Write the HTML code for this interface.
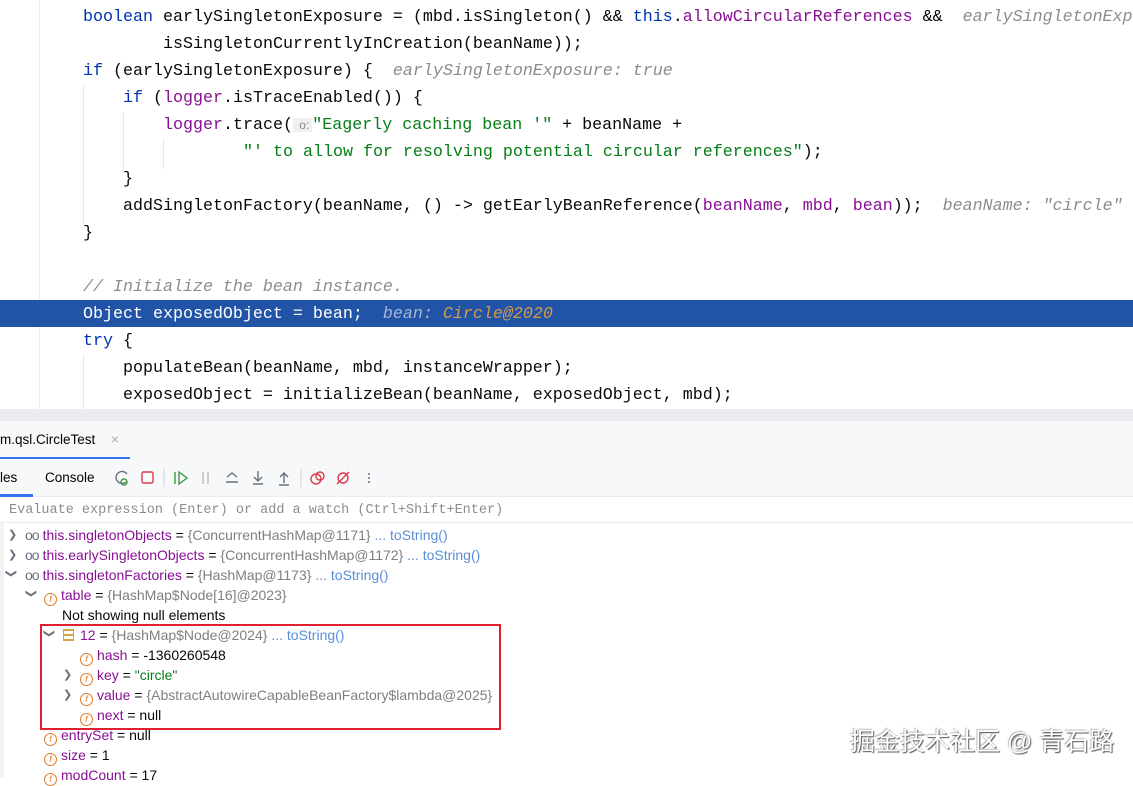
<!DOCTYPE html>
<html><head><meta charset="utf-8"><style>
*{margin:0;padding:0;box-sizing:border-box}
body{width:1133px;height:777px;overflow:hidden;background:#fff;position:relative;font-family:"Liberation Sans",sans-serif}
.ed{position:absolute;left:0;top:0;width:1133px;height:420px;background:#fff;overflow:hidden}
.gut{position:absolute;left:0;top:0;width:40px;height:420px;border-right:1px solid #ebecf0}
.l{position:absolute;left:0;height:27px;line-height:27px;font-family:"Liberation Mono",monospace;font-size:16.67px;color:#080808;white-space:pre}
.k{color:#0033b3}.f{color:#871094}.s{color:#067d17}.h{color:#8c8c8c;font-style:italic}
.hl{position:absolute;left:0;top:300px;width:1133px;height:27px;background:#2154a6}
.ig{position:absolute;width:1px;background:#e6e6e6}
.tabs{position:absolute;left:0;top:420px;width:1133px;height:40px;background:#f7f8fa;border-top:1px solid #ebecf0;border-bottom:1px solid #ebecf0;font-size:13.5px;color:#000}
.tb{position:absolute;left:0;top:459px;width:1133px;height:38px;background:#f7f8fa;border-bottom:1px solid #ebecf0;font-size:13.5px}
.ev{position:absolute;left:0;top:498px;width:1133px;height:25px;border-bottom:1px solid #ebecf0;font-family:"Liberation Mono",monospace;font-size:13.5px;color:#8c8c8c;line-height:25px;padding-left:9px}
.r{position:absolute;height:20px;line-height:20px;font-size:14px;white-space:nowrap;color:#080808}
.n{color:#871094}.g{color:#7f7f7f}.b{color:#5a8fd6}.sg{color:#067d17}
.fi{display:inline-block;width:13px;height:13px;border:1.3px solid #e07b2a;border-radius:50%;color:#e07b2a;font-size:9px;line-height:11px;text-align:center;font-style:italic;vertical-align:-2px;margin-right:4px}
.ch{position:absolute;color:#6c707e;font-size:11px}
.oo{color:#6c707e;letter-spacing:-1px;margin-right:4px}
</style></head><body>
<div class="ed">
<div class="gut"></div>
<div class="hl"></div>
<div class="ig" style="left:83px;top:85px;height:140px"></div>
<div class="ig" style="left:123px;top:112px;height:60px"></div>
<div class="ig" style="left:163px;top:139px;height:30px"></div>
<div class="ig" style="left:83px;top:355px;height:60px"></div>
<div class="l" style="top:4px;left:83px"><span class="k">boolean</span> earlySingletonExposure = (mbd.isSingleton() &amp;&amp; <span class="k">this</span>.<span class="f">allowCircularReferences</span> &amp;&amp;  <span class="h">earlySingletonExposure: true</span></div>
<div class="l" style="top:31px;left:163px">isSingletonCurrentlyInCreation(beanName));</div>
<div class="l" style="top:58px;left:83px"><span class="k">if</span> (earlySingletonExposure) {  <span class="h">earlySingletonExposure: true</span></div>
<div class="l" style="top:85px;left:123px"><span class="k">if</span> (<span class="f">logger</span>.isTraceEnabled()) {</div>
<div class="l" style="top:112px;left:163px"><span class="f">logger</span>.trace(<span style="background:#f0f0f0;color:#8c8c8c;font-family:'Liberation Sans';font-size:12px;padding:0 3px"> o:</span><span class="s">"Eagerly caching bean '"</span> + beanName +</div>
<div class="l" style="top:139px;left:243px"><span class="s">"' to allow for resolving potential circular references"</span>);</div>
<div class="l" style="top:166px;left:123px">}</div>
<div class="l" style="top:193px;left:123px">addSingletonFactory(beanName, () -&gt; getEarlyBeanReference(<span class="f">beanName</span>, <span class="f">mbd</span>, <span class="f">bean</span>));  <span class="h">beanName: "circle"</span></div>
<div class="l" style="top:220px;left:83px">}</div>
<div class="l" style="top:274px;left:83px"><span class="h">// Initialize the bean instance.</span></div>
<div class="l" style="top:301px;left:83px;color:#fff">Object exposedObject = bean;  <span style="font-style:italic;color:#a9b7d6">bean: </span><span style="font-style:italic;color:#d59a4a">Circle@2020</span></div>
<div class="l" style="top:328px;left:83px"><span class="k">try</span> {</div>
<div class="l" style="top:355px;left:123px">populateBean(beanName, mbd, instanceWrapper);</div>
<div class="l" style="top:382px;left:123px">exposedObject = initializeBean(beanName, exposedObject, mbd);</div>
<div class="l" style="top:405px;left:83px">}</div>
<div style="position:absolute;left:0;top:409px;width:1133px;height:11px;background:#ebecf0"></div>
</div>
<div class="tabs"><span style="position:absolute;left:0;top:11px">m.qsl.CircleTest</span><span style="position:absolute;left:111px;top:11px;color:#aaa">×</span><div style="position:absolute;left:0;top:36px;width:130px;height:3px;background:#3574f0"></div></div>
<div class="tb">
<span style="position:absolute;left:0;top:11px">les</span><div style="position:absolute;left:0;top:35px;width:33px;height:3px;background:#3574f0"></div>
<span style="position:absolute;left:45px;top:11px">Console</span>
<svg style="position:absolute;left:110px;top:9px" width="270" height="20" viewBox="0 0 270 20" fill="none" stroke-width="1.4">
<path d="M17 6a6 6 0 1 0 -1 8" stroke="#6c707e"/><circle cx="14" cy="14" r="3" stroke="#3c9c41"/>
<rect x="32" y="4" width="11" height="11" rx="1.5" stroke="#db3b4b"/>
<line x1="54" y1="1" x2="54" y2="19" stroke="#ddd"/>
<path d="M65 4v12M69 4l8 6-8 6z" stroke="#3c9c41"/>
<path d="M93 4v12M98 4v12" stroke="#bbb"/>
<path d="M117 9l5-4 5 4M116 14h12" stroke="#6c707e"/>
<path d="M148 3v10M144 9l4 4 4-4M143 16h10" stroke="#6c707e"/>
<path d="M174 15V5M170 9l4-4 4 4M169 17h10" stroke="#6c707e"/>
<line x1="191" y1="1" x2="191" y2="19" stroke="#ddd"/>
<circle cx="206" cy="11" r="5" stroke="#db3b4b"/><circle cx="210" cy="8" r="4" stroke="#db3b4b"/>
<circle cx="233" cy="10" r="5" stroke="#db3b4b"/><path d="M227 16l12-12" stroke="#db3b4b"/>
<circle cx="259" cy="6" r="1" fill="#6c707e"/><circle cx="259" cy="10" r="1" fill="#6c707e"/><circle cx="259" cy="14" r="1" fill="#6c707e"/>
</svg>
</div>
<div class="ev">Evaluate expression (Enter) or add a watch (Ctrl+Shift+Enter)</div>
<div style="position:absolute;left:0;top:523px;width:4px;height:254px;background:#f2f2f2"></div>
<span class="ch" style="left:8px;top:528px">❯</span>
<div class="r" style="left:25px;top:525px"><span class="oo">oo</span><span class="n">this.singletonObjects</span> = <span class="g">{ConcurrentHashMap@1171}</span> <span class="b">... toString()</span></div>
<span class="ch" style="left:8px;top:548px">❯</span>
<div class="r" style="left:25px;top:545px"><span class="oo">oo</span><span class="n">this.earlySingletonObjects</span> = <span class="g">{ConcurrentHashMap@1172}</span> <span class="b">... toString()</span></div>
<span class="ch" style="left:7px;top:567px;transform:rotate(90deg)">❯</span>
<div class="r" style="left:25px;top:565px"><span class="oo">oo</span><span class="n">this.singletonFactories</span> = <span class="g">{HashMap@1173}</span> <span class="b">... toString()</span></div>
<span class="ch" style="left:27px;top:587px;transform:rotate(90deg)">❯</span>
<div class="r" style="left:44px;top:585px"><span class="fi">f</span><span class="n">table</span> = <span class="g">{HashMap$Node[16]@2023}</span></div>
<div class="r" style="left:62px;top:605px">Not showing null elements</div>
<span class="ch" style="left:45px;top:627px;transform:rotate(90deg)">❯</span>
<div class="r" style="left:63px;top:625px"><span style="display:inline-block;width:11px;height:12px;border-top:2px solid #d9a343;border-bottom:2px solid #d9a343;background:linear-gradient(#fff 3px,#d9a343 3px,#d9a343 5px,#fff 5px);vertical-align:-1px;margin-right:6px;border-left:1px solid #d9a343;border-right:1px solid #d9a343"></span><span class="n">12</span> = <span class="g">{HashMap$Node@2024}</span> <span class="b">... toString()</span></div>
<div class="r" style="left:80px;top:645px"><span class="fi">f</span><span class="n">hash</span> = -1360260548</div>
<span class="ch" style="left:63px;top:668px">❯</span>
<div class="r" style="left:80px;top:665px"><span class="fi">f</span><span class="n">key</span> = <span class="sg">"circle"</span></div>
<span class="ch" style="left:63px;top:688px">❯</span>
<div class="r" style="left:80px;top:685px"><span class="fi">f</span><span class="n">value</span> = <span class="g">{AbstractAutowireCapableBeanFactory$lambda@2025}</span></div>
<div class="r" style="left:80px;top:705px"><span class="fi">f</span><span class="n">next</span> = null</div>
<div class="r" style="left:44px;top:725px"><span class="fi">f</span><span class="n">entrySet</span> = null</div>
<div class="r" style="left:44px;top:745px"><span class="fi">f</span><span class="n">size</span> = 1</div>
<div class="r" style="left:44px;top:765px"><span class="fi">f</span><span class="n">modCount</span> = 17</div>
<div style="position:absolute;left:40px;top:624px;width:461px;height:106px;border:2px solid #e0202e"></div>
<div style="position:absolute;left:850px;top:722px;font-family:'Liberation Sans','Noto Sans CJK SC',sans-serif;font-size:25px;color:#fff;text-shadow:1px 1px 1px #555,-1px -1px 1px #bbb;white-space:nowrap">掘金技术社区 @ 青石路</div>
</body></html>
